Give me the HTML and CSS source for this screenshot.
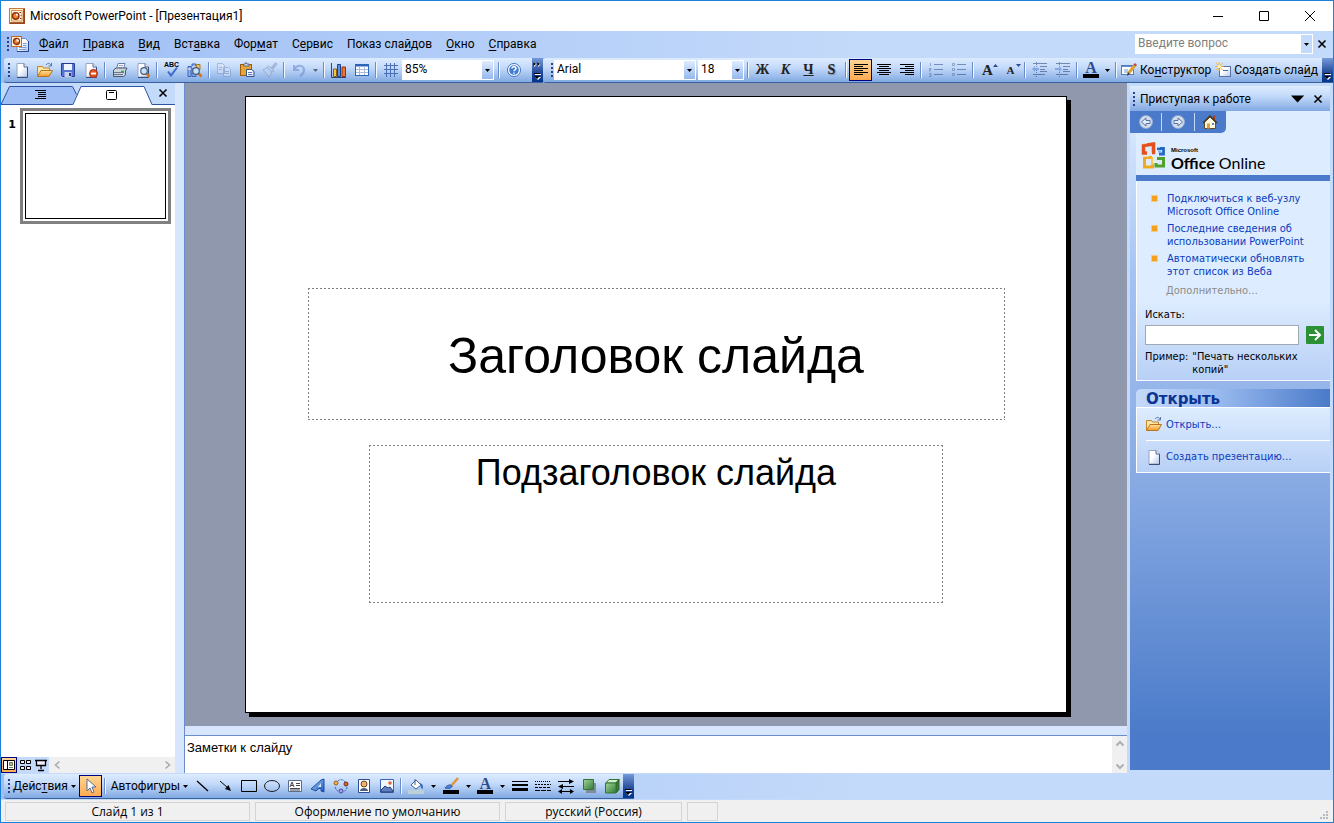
FILE: index.html
```html
<!DOCTYPE html>
<html lang="ru">
<head>
<meta charset="utf-8">
<title>Microsoft PowerPoint - [Презентация1]</title>
<link rel="stylesheet" href="styles.css">
</head>
<body>
<svg class="defs" aria-hidden="true">
  <defs>
    <linearGradient id="gPaper" x2="1" y2="1"><stop offset="0.4" stop-color="#fff"/><stop offset="1" stop-color="#b4c8ee"/></linearGradient>
    <linearGradient id="gFolder" y2="1" x2="0"><stop offset="0" stop-color="#ffe29a"/><stop offset="1" stop-color="#f09a2c"/></linearGradient>
    <linearGradient id="gGreen" x2="1" y2="1"><stop offset="0" stop-color="#a4d49a"/><stop offset="1" stop-color="#2c7a34"/></linearGradient>
    <linearGradient id="gBlue" x2="1" y2="1"><stop offset="0" stop-color="#a8d4fa"/><stop offset="1" stop-color="#1c54b8"/></linearGradient>
    <symbol id="paper" viewBox="0 0 16 16"><path d="M3 1.500h7l3.500 3.500v10H3z" fill="url(#gPaper)" stroke="#9aa4bc"/><path d="M13.500 5v10.500H3" fill="none" stroke="#3c4c78"/><path d="M10 1.500V5h3.500" fill="#dce6f8" stroke="#5c6c94"/></symbol>
    <symbol id="folder" viewBox="0 0 16 16"><path d="M.5 14V4.500h5l1 1.500h6v3" fill="#fce6a4" stroke="#c48428"/><path d="M.5 14.500L4 8.500h11.500l-3.500 6z" fill="url(#gFolder)" stroke="#b87420"/><path d="M9 3c2-2.500 4-2 5 .5M14.500 1v3h-3" fill="none" stroke="#5878a8"/></symbol>
    <symbol id="lens" viewBox="0 0 16 16"><path d="M11.500 11.500l3 3" stroke="#c87820" stroke-width="2.500"/><circle cx="9" cy="9" r="3.300" fill="#c4e4fc" stroke="#4a5c80" stroke-width="1.200"/></symbol>
    <symbol id="ppt" viewBox="0 0 16 16"><rect x=".5" y=".5" width="15" height="15" fill="#fff0c8" stroke="#c87840"/><path d="M15 1v14H1" fill="none" stroke="#8c3410" stroke-width="1.600"/><path d="M2.500 2.500h10.500v10.500h-10.500z" fill="#fffbe8" stroke="#d89048"/><circle cx="6.700" cy="8" r="3.200" fill="#e88c30" stroke="#9c2c0c" stroke-width="1.500"/><path d="M7 7.500V5.500a2.500 2.500 0 0 1 2.300 2z" fill="#fff"/><path d="M10.500 4.500h1.500M11.500 7.500h1M11 10.500h1.500" stroke="#8c2c0c"/></symbol>
    <symbol id="chev" viewBox="0 0 11 24"><path d="M3 16.500h6" stroke="#fff"/><path d="M3 19h6l-3 3z" fill="#fff"/><path d="M2 15.500h6" stroke="#000"/><path d="M2 18h6l-3 3z" fill="#000"/></symbol>
    <symbol id="x" viewBox="0 0 10 10"><path d="M1.500 1.500l7 7m0-7l-7 7" stroke="#000" stroke-width="1.600"/></symbol>
    <symbol id="dd" viewBox="0 0 5 3"><path d="M0 0h5L2.500 3z"/></symbol>
    <symbol id="al" viewBox="0 0 16 16"><path d="M1 2.500h14M1 4.500h9M1 6.500h14M1 8.500h9M1 10.500h14M1 12.500h9" stroke="#000"/></symbol>
  </defs>
</svg>

<header class="title-bar">
  <svg class="i16"><use href="#ppt"/></svg>
  <h1>Microsoft PowerPoint - [Презентация1]</h1>
  <div class="win-buttons">
    <button aria-label="Свернуть"><svg class="i11" viewBox="0 0 11 11"><path d="M0 5.500h10" stroke="#000"/></svg></button>
    <button aria-label="Развернуть"><svg class="i11" viewBox="0 0 11 11"><path d="M.5.500h9v9h-9z" fill="none" stroke="#000"/></svg></button>
    <button aria-label="Закрыть"><svg class="i11" viewBox="0 0 11 11"><path d="M0 0l10 10M10 0L0 10" stroke="#000"/></svg></button>
  </div>
</header>

<nav class="menu-bar">
  <i class="grip"></i>
  <svg class="i20" viewBox="0 0 20 18"><path d="M6 3.500h8.500l3 3v10H6z" fill="url(#gPaper)" stroke="#6c8cc8"/><path d="M17.500 6v10.500H6" fill="none" stroke="#24468c"/><path d="M12 8.500h3.500M12 10.500h3.500M8 12.500h7.500M8 14.500h7.500" stroke="#7c9cd4"/><rect x=".5" y="1.500" width="10" height="10" fill="#fff0d4" stroke="#c86424"/><circle cx="5.500" cy="6.500" r="3" fill="#e07c34" stroke="#8c2c0c" stroke-width="1.300"/><path d="M5.500 6.500v-2.500a2.500 2.500 0 0 1 2.500 2.500z" fill="#fff"/></svg>
  <ul>
    <li><button><u>Ф</u>айл</button></li><li><button><u>П</u>равка</button></li><li><button><u>В</u>ид</button></li><li><button>Вст<u>а</u>вка</button></li><li><button>Фор<u>м</u>ат</button></li><li><button>С<u>е</u>рвис</button></li><li><button>Показ сла<u>й</u>дов</button></li><li><button><u>О</u>кно</button></li><li><button><u>С</u>правка</button></li>
  </ul>
  <div class="combo ask">
    <input type="text" aria-label="Введите вопрос" placeholder="Введите вопрос">
    <span class="arrow"><svg class="dd"><use href="#dd"/></svg></span>
  </div>
  <button class="doc-close" aria-label="Закрыть документ"><svg class="i10"><use href="#x"/></svg></button>
</nav>

<div class="bars">
  <div class="toolbar standard" role="toolbar" aria-label="Стандартная">
    <i class="grip"></i>
    <button class="tb" aria-label="Создать"><svg class="i16"><use href="#paper"/></svg></button>
    <button class="tb" aria-label="Открыть"><svg class="i16"><use href="#folder"/></svg></button>
    <button class="tb" aria-label="Сохранить"><svg class="i16" viewBox="0 0 16 16"><path d="M1.500 1.500h13v13h-12l-1-1z" fill="#5474d0" stroke="#2c3c94"/><path d="M4 2h8v6H4z" fill="#eef4ff"/><path d="M4.500 10h7v5h-7z" fill="#c4d0ec"/><path d="M9 11h2v3H9z" fill="#24348c"/></svg></button>
    <button class="tb" aria-label="Разрешения"><svg class="i16"><use href="#paper"/><circle cx="10.500" cy="11.500" r="4" fill="#e45424" stroke="#a82c10"/><path d="M8 11.500h5" stroke="#fff" stroke-width="1.800"/></svg></button>
    <i class="sep"></i>
    <button class="tb" aria-label="Печать"><svg class="i16" viewBox="0 0 16 16"><path d="M4.500 7L6 1.500h7L11.500 7" fill="#fff" stroke="#6c7ca4"/><path d="M7 3.500h4M6.500 5.500h4" stroke="#8ca4d4"/><path d="M1.500 8L4 6h11l-1.500 3v4l-2 1.500H1.500z" fill="#ccd4e0" stroke="#4c5870"/><path d="M2 10.500h10M2 12.500h9" stroke="#6c7890"/><path d="M9 9.500h3" stroke="#2cb42c" stroke-width="1.500"/></svg></button>
    <button class="tb" aria-label="Просмотр"><svg class="i16"><use href="#paper"/><use href="#lens"/></svg></button>
    <i class="sep"></i>
    <button class="tb" aria-label="Орфография"><svg class="i16" viewBox="0 0 16 16"><text x="0" y="5" class="abc">ABC</text><path d="M4 9.500l3 4 6-8" fill="none" stroke="#3c6cd0" stroke-width="2"/></svg></button>
    <button class="tb" aria-label="Справочные материалы"><svg class="i16" viewBox="0 0 16 16"><path d="M1 4.500h3v10H1zM5 2h4v12.500H5z" fill="#8cb0ec" stroke="#3c64b4"/><path d="M9.500 2.500h3.500v5H9.500z" fill="#f0c468" stroke="#a87420"/><path d="M1 7h3M5 5h4" stroke="#fff"/><use href="#lens"/></svg></button>
    <i class="sep"></i>
    <button class="tb" aria-label="Копировать"><svg class="i16 off" viewBox="0 0 16 16"><path d="M1.500 1.500h5l2 2v8h-7zM7.500 5.500h5l2 2v7h-7z" fill="#dce6f8" stroke="#7c90b8"/><path d="M3 5.500h3M3 7.500h3M9 9.500h4M9 11.500h4" stroke="#7c90b8"/></svg></button>
    <button class="tb" aria-label="Вставить"><svg class="i16" viewBox="0 0 16 16"><rect x="1.500" y="2.500" width="11" height="11" fill="#e8a434" stroke="#9c5c10"/><path d="M4.500 4V2h2L7 .5 8 2h2v2z" fill="#dce0e8" stroke="#5c6884"/><path d="M7.500 7.500h5l2.500 2v5H7.500z" fill="url(#gPaper)" stroke="#3c508c"/><path d="M9 10.500h4M9 12.500h4" stroke="#5c7cbc"/></svg></button>
    <button class="tb" aria-label="Формат по образцу"><svg class="i16 off" viewBox="0 0 16 16"><path d="M14.500 1L10 6.500" stroke="#7c90b8" stroke-width="3"/><path d="M7 4l5 5-2 1-5-5zM5 5.500L1 8l6 7 3-5z" fill="#c0d0ec" stroke="#7c90b8"/></svg></button>
    <i class="sep"></i>
    <button class="tb" aria-label="Отменить"><svg class="i16 off" viewBox="0 0 16 16"><path d="M3 3v5h5M3 8c3-6 10-5 10 0 0 2-1 4-4 6" fill="none" stroke="#5c7cc4" stroke-width="2"/></svg></button>
    <button class="drop off" aria-label="Список отмены"><svg class="dd"><use href="#dd"/></svg></button>
    <i class="sep"></i>
    <button class="tb" aria-label="Диаграмма"><svg class="i16" viewBox="0 0 16 16"><path d="M.5 1v14.500H15" fill="none" stroke="#2c4478"/><path d="M2.500 7h3v7.500h-3z" fill="#f4c444" stroke="#8c5c10"/><path d="M6.500 2.500h3v12h-3z" fill="#5c94e4" stroke="#1c3c8c"/><path d="M11 5h3.500v9.500H11z" fill="#ec7434" stroke="#943410"/></svg></button>
    <button class="tb" aria-label="Таблица"><svg class="i16" viewBox="0 0 16 16"><rect x="1.500" y="2.500" width="13" height="11" fill="#fff" stroke="#2c64bc"/><path d="M1 3.500h14" stroke="#2c64bc" stroke-width="2"/><path d="M2 7.500h12M2 10.500h12M5.500 5v8M10.500 5v8" stroke="#a8bce0"/></svg></button>
    <i class="sep"></i>
    <button class="tb" aria-label="Сетка"><svg class="i16" viewBox="0 0 16 16"><path d="M1 3.500h14M1 7.500h14M1 11.500h14M3.500 1v14M7.500 1v14M11.500 1v14" stroke="#4c70b4"/></svg></button>
    <div class="combo zoom"><select aria-label="Масштаб"><option>85%</option></select><span class="arrow"><svg class="dd"><use href="#dd"/></svg></span></div>
    <i class="sep"></i>
    <button class="tb" aria-label="Справка"><svg class="i16" viewBox="0 0 16 16"><circle cx="8" cy="8" r="6.500" fill="#fff" stroke="#3c74c8"/><circle cx="8" cy="8" r="4.800" fill="#3c7cd4"/><path d="M6 6.500c0-2.500 4-2.500 4 0 0 1.300-2 1.300-2 2.800M8 10.500v1.300" fill="none" stroke="#fff" stroke-width="1.500"/></svg></button>
    <button class="more" aria-label="Параметры стандартной панели"><svg viewBox="0 0 11 24"><path d="M2 4v5l2.500-2.500zM6 4v5l2.500-2.500z" fill="#fff"/><path d="M1.500 4v4L4 6zM5.500 4v4L8 6z"/><use href="#chev"/></svg></button>
  </div>
  <div class="toolbar format" role="toolbar" aria-label="Форматирование">
    <i class="grip"></i>
    <div class="combo font"><select aria-label="Шрифт"><option>Arial</option></select><span class="arrow"><svg class="dd"><use href="#dd"/></svg></span></div>
    <div class="combo size"><select aria-label="Размер шрифта"><option>18</option></select><span class="arrow"><svg class="dd"><use href="#dd"/></svg></span></div>
    <i class="sep"></i>
    <button class="tb letter">Ж</button><button class="tb letter italic">К</button><button class="tb letter under">Ч</button><button class="tb letter shade">S</button>
    <i class="sep"></i>
    <button class="tb on" aria-label="По левому краю"><svg class="i16"><use href="#al"/></svg></button>
    <button class="tb" aria-label="По центру"><svg class="i16" viewBox="0 0 16 16"><path d="M1 2.500h14M3 4.500h10M1 6.500h14M3 8.500h10M1 10.500h14M3 12.500h10" stroke="#000"/></svg></button>
    <button class="tb" aria-label="По правому краю"><svg class="i16" viewBox="0 0 16 16"><path d="M1 2.500h14M6 4.500h9M1 6.500h14M6 8.500h9M1 10.500h14M6 12.500h9" stroke="#000"/></svg></button>
    <i class="sep"></i>
    <button class="tb" aria-label="Нумерация"><svg class="i16 off" viewBox="0 0 16 16"><path d="M6 2.500h9M6 7.500h9M6 12.500h9" stroke="#1c4080"/><path d="M2.500 1v3M1 6.500h2v1H1.500v1.500H3M1 11.500h2v3H1M1.500 13H3" fill="none" stroke="#4c689c"/></svg></button>
    <button class="tb" aria-label="Маркеры"><svg class="i16 off" viewBox="0 0 16 16"><path d="M6 2.500h9M6 7.500h9M6 12.500h9" stroke="#1c4080"/><path d="M1.500 1.500h2v2h-2zM1.500 6.500h2v2h-2zM1.500 11.500h2v2h-2z" fill="none" stroke="#4c689c"/></svg></button>
    <i class="sep"></i>
    <button class="tb letter big">A<svg class="up" viewBox="0 0 5 3"><path d="M0 3h5L2.500 0z" fill="#2c4c94"/></svg></button>
    <button class="tb letter small">A<svg class="up" viewBox="0 0 5 3"><path d="M0 0h5L2.500 3z" fill="#2c4c94"/></svg></button>
    <i class="sep"></i>
    <button class="tb" aria-label="Уменьшить отступ"><svg class="i16 off" viewBox="0 0 16 16"><path d="M1 1.500h14M8 4.500h7M8 7.500h5M8 9.500h7M1 12.500h12" stroke="#1c3468"/><path d="M4.500 0v15" stroke="#1c3468" stroke-dasharray="1 1"/><path d="M0 7l3-3v2h4v2H3v2z" fill="#4c7cd4"/></svg></button>
    <button class="tb" aria-label="Увеличить отступ"><svg class="i16 off" viewBox="0 0 16 16"><path d="M1 1.500h14M8 4.500h7M8 7.500h5M8 9.500h7M1 12.500h12" stroke="#1c3468"/><path d="M4.500 0v15" stroke="#1c3468" stroke-dasharray="1 1"/><path d="M7 7L4 4v2H0v2h4v2z" fill="#4c7cd4"/></svg></button>
    <i class="sep"></i>
    <button class="tb color" aria-label="Цвет текста">A</button>
    <button class="drop" aria-label="Выбор цвета текста"><svg class="dd"><use href="#dd"/></svg></button>
    <i class="sep"></i>
    <button class="tb text"><svg class="i16" viewBox="0 0 16 16"><rect x=".5" y="3.500" width="12" height="9" fill="#fff" stroke="#5c7cb4"/><path d="M1 4.500h11" stroke="#5c8cd4"/><path d="M3 8h4M3 10h5" stroke="#6c94dc"/><path d="M7 12l7-9" stroke="#e0a030" stroke-width="3"/><path d="M13.500 3.500L15 2" stroke="#c44c3c" stroke-width="3"/><path d="M6 14l1-4 2 2z" fill="#345"/></svg><span>Ко<u>н</u>структор</span></button>
    <button class="tb text"><svg class="i16" viewBox="0 0 16 16"><rect x="4.500" y="4.500" width="11" height="10" fill="url(#gPaper)" stroke="#5c74a4"/><path d="M8 8.500h5" stroke="#4c6cac"/><path d="M4 0v9M0 4.500h8.500M1 1l6.500 7M7.500 1L1 8" stroke="#f4b83c"/><circle cx="4.200" cy="4.500" r="1.500" fill="#fff8c8"/></svg><span>Создать сла<u>й</u>д</span></button>
    <button class="more" aria-label="Параметры форматирования"><svg viewBox="0 0 11 24"><use href="#chev"/></svg></button>
  </div>
</div>

<main class="workspace">
  <aside class="thumbs">
    <div class="tabs">
      <button class="tab" aria-label="Структура"><svg viewBox="0 0 77 19"><path d="M0 18.500L8.500.500h63l4 8-4 10z" fill="#9ebef5"/><path d="M0 18.500L8.500.500h63l4 8M0 18.500h71" fill="none" stroke="#2c54a4"/><path d="M34 4.500h11M37 6.500h8M37 8.500h8M37 10.500h8M34 12.500h11" stroke="#000"/></svg></button>
      <button class="tab front" aria-label="Слайды"><svg viewBox="0 0 80 19"><path d="M0 19L8 .5h63L79 19z" fill="#fff"/><path d="M0 18.500L8 .5h63l8 18" fill="none" stroke="#2c54a4"/><rect x="33.500" y="4.500" width="10" height="9" rx="1" fill="#fff" stroke="#000"/><path d="M36 6.500h5" stroke="#000"/></svg></button>
      <button class="tab-close" aria-label="Закрыть область"><svg class="i10"><use href="#x"/></svg></button>
    </div>
    <ol class="list"><li><b>1</b><button class="thumb" aria-label="Слайд 1"><span></span></button></li></ol>
    <div class="views">
      <button class="view on" aria-label="Обычный режим"><svg viewBox="0 0 14 14"><path d="M1.500 2.500h11v9h-11zM5.500 3v9" fill="#fff" stroke="#000"/><path d="M7.500 4.500h3v3h-3zM7 9.500h4" fill="#a8c090" stroke="#6c7c5c"/></svg></button>
      <button class="view" aria-label="Сортировщик"><svg viewBox="0 0 14 14"><path d="M2.500 2.500h4v3h-4zM8.500 2.500h4v3h-4zM2.500 8.500h4v3h-4zM8.500 8.500h4v3h-4z" fill="#eef" stroke="#000"/></svg></button>
      <button class="view" aria-label="Показ слайдов"><svg viewBox="0 0 14 14"><path d="M1 2.500h12M2.500 3v4.500h9V3M7 8v3M4 12.500h6" fill="#eef" stroke="#000" stroke-width="1.300"/></svg></button>
      <div class="hscroll"><svg viewBox="0 0 7 10"><path d="M5.500 1.500L1.500 5l4 3.500" fill="none" stroke="#a8a8b0" stroke-width="1.500"/></svg><svg viewBox="0 0 7 10"><path d="M1.500 1.500l4 3.500-4 3.500" fill="none" stroke="#a8a8b0" stroke-width="1.500"/></svg></div>
    </div>
  </aside>
  <div class="vsplit"></div>
  <section class="editor">
    <div class="canvas">
      <article class="slide">
        <h2 class="holder head">Заголовок слайда</h2>
        <p class="holder sub">Подзаголовок слайда</p>
      </article>
    </div>
    <div class="notes">
      <textarea aria-label="Заметки к слайду" placeholder="Заметки к слайду"></textarea>
      <div class="vscroll"><svg viewBox="0 0 10 7"><path d="M1.500 5.500L5 2l3.500 3.500" fill="none" stroke="#a8b0b8" stroke-width="2"/></svg><svg viewBox="0 0 10 7"><path d="M1.500 1.500L5 5l3.500-3.500" fill="none" stroke="#a8b0b8" stroke-width="2"/></svg></div>
    </div>
  </section>
  <aside class="task">
    <div class="task-head"><i class="grip"></i><h2>Приступая к работе</h2>
      <button aria-label="Другие области задач"><svg class="tri" viewBox="0 0 16 8"><path d="M0 0h15L7.500 8z"/></svg></button>
      <button aria-label="Закрыть область задач"><svg class="i10"><use href="#x"/></svg></button></div>
    <div class="task-body">
      <div class="task-nav"><div class="nav-buttons">
        <button aria-label="Назад"><svg class="i16" viewBox="0 0 16 16"><circle cx="8" cy="8" r="6.500" fill="#d4dce8" stroke="#90a8d4"/><path d="M3.500 8L8 4v2.500h4v3H8V12z" fill="#e8eef8" stroke="#5474b0"/></svg></button><i></i>
        <button aria-label="Вперед"><svg class="i16" viewBox="0 0 16 16"><circle cx="8" cy="8" r="6.500" fill="#d4dce8" stroke="#90a8d4"/><path d="M12.500 8L8 4v2.500H4v3h4V12z" fill="#e8eef8" stroke="#5474b0"/></svg></button><i></i>
        <button aria-label="Домой"><svg class="i16" viewBox="0 0 16 16"><path d="M11 1.500h2V6h-2z" fill="#a83c1c"/><path d="M2.500 8L8 3l5.500 5v6.500h-11z" fill="#fff8dc" stroke="#5c5030"/><path d="M1 9l7-7 7 7" fill="none" stroke="#483820" stroke-width="1.500"/><path d="M5 9.500h3v5H5z" fill="#e8a030"/><path d="M10 9h2v2h-2z" fill="#5c8cd0"/></svg></button>
      </div></div>
      <div class="cards">
        <div class="brand">
          <svg viewBox="0 0 28 28" fill="none"><path d="M11 10.500h1.500V2L2.500 3.500V11H6" stroke="#e4501c" stroke-width="3.500"/><path d="M16 6.500h6.500V12H18" stroke="#2468c4" stroke-width="2.800"/><path d="M17 9.500h3" stroke="#7cb4f0" stroke-width="2"/><path d="M11 15.500H3.500V25H11.500v-3.500" stroke="#f4a81c" stroke-width="3"/><path d="M11 15v8" stroke="#f8c84c" stroke-width="2"/><path d="M16 16.500h6.500V24H15v-3" stroke="#54a02c" stroke-width="3"/><path d="M1 2l5-.5M2 14.500h6M15 5.500h4" stroke="#fff" stroke-opacity=".5"/></svg>
          <div><small>Microsoft</small><p><b>Office</b> Online</p></div>
        </div>
        <section class="card online">
          <ul>
            <li><a href="#">Подключиться к веб-узлу<br>Microsoft Office Online</a></li>
            <li><a href="#">Последние сведения об<br>использовании PowerPoint</a></li>
            <li><a href="#">Автоматически обновлять<br>этот список из Веба</a></li>
          </ul>
          <p class="extra">Дополнительно…</p>
          <label for="q">Искать:</label>
          <div class="search"><input id="q" type="text"><button aria-label="Найти"><svg viewBox="0 0 18 18"><path d="M3 9h11M9 4l5 5-5 5" fill="none" stroke="#fff" stroke-width="2"/></svg></button></div>
          <p class="example"><span>Пример:</span><span>"Печать нескольких<br>копий"</span></p>
        </section>
        <section class="card open">
          <h3>Открыть</h3>
          <div class="open-list">
            <a href="#"><svg class="i16"><use href="#folder"/></svg>Открыть…</a>
            <a href="#"><svg class="i16"><use href="#paper"/></svg>Создать презентацию…</a>
          </div>
        </section>
      </div>
    </div>
  </aside>
</main>

<div class="bars draw-bar">
  <div class="toolbar" role="toolbar" aria-label="Рисование">
    <i class="grip"></i>
    <button class="tb text"><span>Дейс<u>т</u>вия</span><svg class="dd"><use href="#dd"/></svg></button>
    <button class="tb on" aria-label="Выбор объектов"><svg class="i16" viewBox="0 0 16 16"><path d="M5 1v12l3-3 2 5 2-1-2-5h4z" fill="#fff" stroke="#546c9c"/></svg></button>
    <i class="sep"></i>
    <button class="tb text"><span>Автофиг<u>у</u>ры</span><svg class="dd"><use href="#dd"/></svg></button>
    <button class="tb" aria-label="Линия"><svg class="i16" viewBox="0 0 16 16"><path d="M2 3l11 10" stroke="#000" stroke-width="1.300"/></svg></button>
    <button class="tb" aria-label="Стрелка"><svg class="i16" viewBox="0 0 16 16"><path d="M2 3l8 7" stroke="#000"/><path d="M13 13l-6-2 3.500-4z"/></svg></button>
    <button class="tb" aria-label="Прямоугольник"><svg class="i16" viewBox="0 0 16 16"><path d="M.5 2.500h15v11H.5z" fill="none" stroke="#000"/></svg></button>
    <button class="tb" aria-label="Овал"><svg class="i16" viewBox="0 0 16 16"><ellipse cx="8" cy="8" rx="7.500" ry="5.500" fill="none" stroke="#222"/></svg></button>
    <button class="tb" aria-label="Надпись"><svg class="i16" viewBox="0 0 16 16"><path d="M1.500 2.500h13v11h-13z" fill="#fff" stroke="#5c6c8c"/><path d="M3 9l2-5 2 5M4 7.500h2M9 5.500h4M9 7.500h4M3 10.500h10M3 12h10" fill="none" stroke="#445"/></svg></button>
    <button class="tb" aria-label="WordArt"><svg class="i16" viewBox="0 0 16 16"><path d="M1 11L11 2l3-1v13l-3-1v-3l-3 1-2 2z" fill="url(#gBlue)" stroke="#1c4ca4"/><path d="M11 5v4L8 9z" fill="#dce8fc"/></svg></button>
    <button class="tb" aria-label="Схема"><svg class="i16" viewBox="0 0 16 16"><path d="M5 3c2-2 5-2 7 1M14 9c0 2-1 4-3 4M5 13c-2-1-3-3-3-5" fill="none" stroke="#3c64b4" stroke-dasharray="2 1"/><circle cx="3" cy="5" r="2" fill="#f4b448" stroke="#946010"/><circle cx="13" cy="6" r="2" fill="#d46434" stroke="#7c2c10"/><circle cx="8" cy="13" r="2" fill="#a4a4f0" stroke="#4444a4"/></svg></button>
    <button class="tb" aria-label="Картинка"><svg class="i16" viewBox="0 0 16 16"><path d="M2.500 1.500h11v13h-11z" fill="#fff" stroke="#2c4c94"/><path d="M4 13c0-4 8-4 8 0z" fill="#4c5c7c"/><circle cx="8" cy="6" r="3" fill="#f0b070" stroke="#6c4420"/></svg></button>
    <button class="tb" aria-label="Рисунок"><svg class="i16" viewBox="0 0 16 16"><path d="M1.500 1.500h13v13h-13z" fill="#f0f6ff" stroke="#3c64b4"/><path d="M2 12l4-4 3 2 2-1 3 4v1H2z" fill="#5c80c4" stroke="#2c3c6c"/><circle cx="11" cy="5" r="1.800" fill="#e46434"/></svg></button>
    <i class="sep"></i>
    <button class="tb" aria-label="Цвет заливки"><svg class="i16" viewBox="0 0 16 16"><path d="M3 7l5-5 5 5-5 4z" fill="#fff" stroke="#44608c"/><path d="M7 7V1" stroke="#44608c"/><path d="M12 5c3 1 3 3 3 6l-2-1z" fill="#3c6cc4"/><path d="M0 12h16v4H0z" fill="#bcd0d8"/></svg></button>
    <button class="drop" aria-label="Выбор заливки"><svg class="dd"><use href="#dd"/></svg></button>
    <button class="tb" aria-label="Цвет линий"><svg class="i16" viewBox="0 0 16 16"><path d="M8 8l7-8" stroke="#e0943c" stroke-width="2.500"/><path d="M2 10c2-3 5-4 7-2 0 2-3 3-7 2z" fill="#4c84dc" stroke="#2c549c"/><path d="M0 12h16v4H0z"/></svg></button>
    <button class="drop" aria-label="Выбор цвета линий"><svg class="dd"><use href="#dd"/></svg></button>
    <button class="tb color" aria-label="Цвет шрифта">A</button>
    <button class="drop" aria-label="Выбор цвета шрифта"><svg class="dd"><use href="#dd"/></svg></button>
    <button class="tb" aria-label="Тип линии"><svg class="i16" viewBox="0 0 16 16"><path d="M0 3.500h16" stroke="#000"/><path d="M0 7h16" stroke="#000" stroke-width="2"/><path d="M0 11.500h16" stroke="#000" stroke-width="3"/></svg></button>
    <button class="tb" aria-label="Тип штриха"><svg class="i16" viewBox="0 0 16 16"><g stroke="#000"><path d="M0 3.500h16" stroke-dasharray="1 1"/><path d="M0 6.500h16" stroke-dasharray="2 1"/><path d="M0 9.500h16" stroke-dasharray="3 1"/><path d="M0 12.500h16" stroke-dasharray="5 1"/></g></svg></button>
    <button class="tb" aria-label="Вид стрелки"><svg class="i16" viewBox="0 0 16 16"><path d="M0 3.500h12M4 8.500h12M3 13.500h10" stroke="#000"/><path d="M11 1l5 2.500L11 6zM5 6L0 8.500 5 11zM4 11l-4 2.500L4 16zM12 11l4 2.500-4 2.500z"/></svg></button>
    <button class="tb" aria-label="Тень"><svg class="i16" viewBox="0 0 16 16"><path d="M5 5h10v10H5z" fill="#7c8c9c"/><path d="M2.500 1.500h10v10h-10z" fill="url(#gGreen)" stroke="#347434"/></svg></button>
    <button class="tb" aria-label="Объем"><svg class="i16" viewBox="0 0 16 16"><path d="M2 5l3-3.500h10L12 5z" fill="#d4f0cc" stroke="#347434"/><path d="M12 5l3-3.500v10L12 15z" fill="#3c7c3c" stroke="#245c24"/><path d="M1.500 5H12v10H1.500z" fill="url(#gGreen)" stroke="#347434"/></svg></button>
    <button class="more" aria-label="Параметры рисования"><svg viewBox="0 0 11 24"><use href="#chev"/></svg></button>
  </div>
</div>

<footer class="status">
  <span>Слайд 1 из 1</span><span>Оформление по умолчанию</span><span class="lang">русский (Россия)</span><span class="tiny"></span>
  <svg class="resize" viewBox="0 0 9 9"><path d="M6 0h2v2H6zM3 3h2v2H3zM6 3h2v2H6zM0 6h2v2H0zM3 6h2v2H3zM6 6h2v2H6z" fill="#b4b8c0"/></svg>
</footer>
</body>
</html>
```
FILE: styles.css
```css
* { box-sizing: border-box; }
html { height: 100%; }
body {
  margin: 0; height: 100%; min-height: 500px;
  display: flex; flex-direction: column;
  border: 1px solid #1a80d8;
  background: #c4dafa; color: #000;
  font: 12px/16px Roboto, "Open Sans", sans-serif;
  overflow: hidden;
}
button, input, select, textarea { font: inherit; color: inherit; border: 0; margin: 0; padding: 0; background: none; }
button { display: flex; align-items: center; justify-content: center; flex: none; }
h1, h2, h3, p, ul, ol { margin: 0; padding: 0; font: inherit; list-style: none; }
svg { display: block; flex: none; overflow: visible; }
u { text-underline-offset: 2px; }
.defs { position: absolute; width: 0; height: 0; }
.i10 { width: 10px; height: 10px; }
.i11 { width: 11px; height: 11px; }
.i16 { width: 16px; height: 16px; }
.i20 { width: 20px; height: 18px; }
.dd { width: 5px; height: 3px; }
.off { opacity: 0.5; }

.title-bar { display: flex; align-items: center; flex: none; height: 30px; padding-left: 8px; background: #fff; }
.title-bar h1 { margin-left: 5px; flex: 1; }
.win-buttons { display: flex; }
.win-buttons button { width: 46px; height: 29px; }

.grip {
  flex: none; width: 2px; height: 14px; margin-right: 2px;
  background: repeating-linear-gradient(#27418a 0 2px, transparent 2px 4px);
}
.menu-bar {
  display: flex; align-items: center; flex: none; height: 27px; padding: 0 3px 1px 6px;
  background: linear-gradient(90deg, #9ebef5, #c4dafa 65%);
}
.menu-bar ul { display: flex; flex: 1; margin-left: 1px; }
.menu-bar li button { padding: 0 7px; }

.combo { position: relative; flex: none; height: 20px; background: #fff; }
.combo select, .combo input { width: 100%; height: 18px; padding: 0 3px; appearance: none; outline: 0; display: block; }
.combo input::placeholder { color: #808080; opacity: 1; }
.arrow {
  position: absolute; top: 1px; right: 1px; bottom: 1px; width: 11px;
  display: flex; align-items: center; justify-content: center; pointer-events: none;
  background: linear-gradient(#dfecff, #94b8ee);
}
.ask { width: 178px; }
.ask .arrow { background: #c4dafa; }
.doc-close { width: 16px; height: 16px; margin-left: 1px; }
.zoom { width: 92px; margin-right: 2px; }
.font { width: 142px; margin-right: 2px; }
.size { width: 46px; margin-right: 1px; }

.bars { display: flex; flex: none; height: 25px; background: #9ebef5; padding-left: 3px; }
.toolbar {
  display: flex; align-items: center; height: 25px; padding-left: 4px; flex: none;
  border-radius: 3px 0 0 3px; border-bottom: 1px solid #3b619c;
  background: linear-gradient(#ddecfe, #c4dafa 40%, #81a9e2);
}
.standard { width: 539px; }
.format { flex: 1; min-width: 0; padding-left: 8px; }
.toolbar .grip { margin-right: 0; }
.format .grip { margin-right: 1px; }
.tb { width: 23px; height: 22px; }
.sep { flex: none; width: 2px; height: 16px; margin: 0 2px; background: linear-gradient(90deg, #6a8ccb 50%, #f1f9ff 50%); }
.drop { width: 11px; height: 22px; }
.draw-bar .drop { width: 12px; }
.on { border: 1px solid #000080; background: linear-gradient(#ffd694, #ffaa50); }
.more {
  width: 11px; height: 24px; margin-left: auto;
  background: linear-gradient(#759ad8, #1c4494 65%, #00358f);
}
.more svg { width: 11px; height: 24px; }
.abc { font: bold 7px "Liberation Sans", sans-serif; }
.letter { position: relative; font: bold 14px "Liberation Serif", serif; color: #222; }
.italic { font-style: italic; }
.under { text-decoration: underline; }
.shade { text-shadow: 1px 1px 1px #7080a0; }
.big { font-size: 15px; }
.small { font-size: 11px; }
.up { position: absolute; top: 5px; right: 1px; width: 5px; height: 3px; }
.color { width: 16px; height: 16px; line-height: 12px; border-bottom: 4px solid #000; margin: 0 3px; font-size: 16px; font-family: "Liberation Serif", serif; font-weight: bold; color: #2c4c8c; }
.text { width: auto; padding: 0 3px; gap: 3px; white-space: nowrap; }
.format .text { padding: 0 2px; }

.workspace { display: flex; flex: 1; min-height: 0; }
.thumbs { width: 174px; flex: none; display: flex; flex-direction: column; background: #fff; }
.tabs { display: flex; align-items: flex-end; flex: none; height: 22px; background: #c4dafa; border-bottom: 1px solid #2c54a4; }
.tab { width: 72px; height: 19px; margin-bottom: -1px; justify-content: flex-start; }
.tab svg { width: 77px; height: 19px; }
.front { width: 80px; position: relative; }
.front svg { width: 80px; }
.tab-close { width: 20px; height: 22px; }
.list { flex: 1; padding: 3px 4px 0 5px; min-height: 0; }
.list li { display: flex; align-items: flex-start; }
.list b { width: 14px; margin-top: 9px; padding-right: 2px; text-align: center; font: bold 11px/16px "DejaVu Sans", sans-serif; }
.thumb { flex: 1; height: 116px; padding: 2px; border: 3px solid #808080; align-items: stretch; }
.thumb span { flex: 1; border: 1px solid #000; }
.views { display: flex; height: 16px; flex: none; background: #c4dafa; }
.view { width: 16px; height: 16px; }
.view svg { width: 14px; height: 14px; }
.hscroll { display: flex; flex: 1; align-items: center; justify-content: space-between; padding: 0 4px 0 5px; background: #f0f0f0; }
.hscroll svg { width: 7px; height: 10px; }
.vsplit { width: 10px; flex: none; background: #d7e6fc; border-right: 1px solid #6a8ccb; }

.editor { flex: 1; min-width: 0; display: flex; flex-direction: column; }
.canvas { flex: 1; min-height: 0; display: flex; padding: 13px 60px; background: #9098ae; }
.slide {
  flex: 1; display: grid; justify-items: center;
  grid-template: 191fr 132fr 25fr 158fr 109fr / 1fr;
  background: #fff; border: 1px solid #000; box-shadow: 4px 4px #000;
  font-family: "Liberation Sans", Arial, sans-serif;
}
.holder {
  text-align: center;
  background:
    repeating-linear-gradient(90deg, #808080 0 2px, transparent 2px 4px) top / 100% 1px no-repeat,
    repeating-linear-gradient(90deg, #808080 0 2px, transparent 2px 4px) bottom / 100% 1px no-repeat,
    repeating-linear-gradient(#808080 0 2px, transparent 2px 4px) left / 1px 100% no-repeat,
    repeating-linear-gradient(#808080 0 2px, transparent 2px 4px) right / 1px 100% no-repeat;
}
.head { grid-row: 2; width: 85%; padding-top: 4px; display: flex; align-items: center; justify-content: center; font-size: 50px; line-height: 56px; }
.sub { grid-row: 4; width: 70%; padding-top: 7px; font-size: 36px; line-height: 41px; }
.notes { display: flex; flex: none; height: 47px; border-top: 9px solid #d7e6fc; box-shadow: inset 0 1px #6a8ccb; background: #fff; }
.notes textarea { flex: 1; resize: none; outline: 0; padding: 5px 2px 4px; font: 13px/16px "Liberation Sans", sans-serif; }
.notes textarea::placeholder { color: #000; opacity: 1; }
.vscroll { width: 15px; margin-top: 1px; background: #f0f0f0; display: flex; flex-direction: column; justify-content: space-between; align-items: center; padding: 4px 0 3px; }
.vscroll svg { width: 10px; height: 7px; }

.task { width: 206px; flex: none; display: flex; flex-direction: column; padding: 3px; font: 11px/13px "DejaVu Sans Condensed", "DejaVu Sans", sans-serif; }
.task-head { display: flex; align-items: center; flex: none; height: 25px; padding: 0 2px 0 3px; background: linear-gradient(#ddecfe, #c4dafa 40%, #81a9e2); font: 12px/16px Roboto, sans-serif; }
.task-head h2 { flex: 1; margin-left: 3px; }
.task-head button { height: 20px; width: 20px; }
.task-head .tri { width: 14px; height: 8px; }
.task-body { flex: 1; min-height: 0; background: linear-gradient(#ddecfe, #a4c2f2 25%, #8aace4 55%, #4a7ac9 95%); }
.task-nav { height: 22px; background: #ddecfe; border-top-right-radius: 5px; }
.nav-buttons { display: flex; align-items: center; width: 96px; height: 22px; background: #4a7ac9; border-bottom-right-radius: 5px; }
.nav-buttons button { flex: 1; height: 22px; }
.nav-buttons i { width: 1px; height: 18px; background: #c4dafa; }
.cards { margin-left: 6px; }
.brand { display: flex; height: 48px; padding: 9px 0 0 5px; gap: 2px; background: #ddecfe; border-bottom: 6px solid #4a7ac9; }
.brand svg { width: 28px; height: 28px; }
.brand small { display: block; font: bold 6px/7px "Liberation Sans", sans-serif; margin-top: 5px; }
.brand p { font: 16px/18px Lato, sans-serif; white-space: nowrap; }
.card { border: 1px solid #fff; border-right: 0; }
.online { border-top-color: #ddecfe; padding: 10px 6px 4px 8px; background: linear-gradient(#ddecfe 60%, #b8d0f6); }
.online li { display: flex; margin-bottom: 4px; }
.online li::before { content: ""; width: 5px; height: 5px; margin: 3px 10px 0 6px; background: #f4a01c; border: 1px solid #f8cc80; flex: none; }
a { color: #0a3cc0; text-decoration: none; white-space: nowrap; }
.online li a { flex: 1; }
.online li::before { margin-right: 9px; }
.extra { color: #8c8c8c; padding-left: 21px; margin: 6px 0 11px; }
.online label { display: block; }
.search { display: flex; justify-content: space-between; align-items: center; gap: 7px; margin: 4px 0 5px; }
.search input { flex: 1; min-width: 0; height: 20px; background: #fff; border: 1px solid #a0a8b8; }
.search button { width: 18px; height: 18px; background: #2c9034; border-radius: 1px; }
.search svg { width: 18px; height: 18px; }
.example { display: flex; gap: 4px; white-space: nowrap; }
.open { margin-top: 8px; border: 0; }
.open h3 { height: 18px; padding-left: 10px; font: bold 15px/20px "DejaVu Sans Condensed", "DejaVu Sans", sans-serif; color: #0c3494; background: linear-gradient(90deg, #c4dafa, #9cbcf0 40%, #4a7ac9); border-top-left-radius: 5px; }
.open h3 { font-family: "DejaVu Sans", sans-serif; }
.open-list { border: 1px solid #fff; border-right: 0; padding-left: 9px; background: linear-gradient(#ddecfe, #b8d0f6); }
.open-list a { display: flex; align-items: center; gap: 4px; height: 32px; }
.open-list a + a { border-top: 1px solid #fff; }

.draw-bar { height: 27px; background: linear-gradient(90deg, #9ebef5, #c4dafa 65%); border-top: 1px solid #c4dafa; border-bottom: 1px solid #c4dafa; }
.status { display: flex; align-items: center; flex: none; height: 22px; padding: 0 4px; gap: 5px; background: #f0f0f0; font-family: "Open Sans", sans-serif; }
.status span { width: 245px; height: 19px; border: 1px solid #d4d4d4; text-align: center; line-height: 17px; }
.status .lang { width: 177px; }
.status .tiny { width: 31px; }
.resize { width: 9px; height: 9px; margin: 8px 0 0 auto; }
```
